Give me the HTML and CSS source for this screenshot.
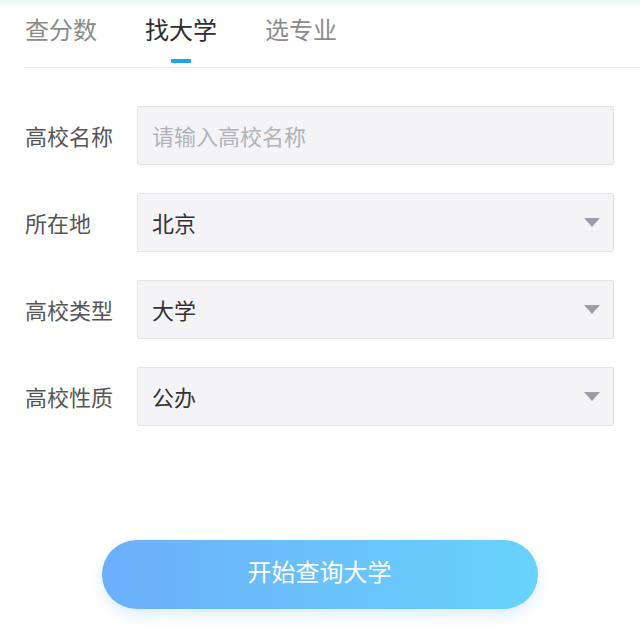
FILE: index.html
```html
<!DOCTYPE html>
<html lang="zh-CN">
<head>
<meta charset="utf-8">
<title>找大学</title>
<link rel="stylesheet" href="styles.css">
</head>
<body>
<div class="page">
  <nav class="tabs">
    <div class="tab">查分数</div>
    <div class="tab active">找大学<span class="bar"></span></div>
    <div class="tab">选专业</div>
  </nav>
  <div class="divider"></div>
  <form class="form">
    <div class="row">
      <label class="label">高校名称</label>
      <div class="field"><span class="placeholder">请输入高校名称</span></div>
    </div>
    <div class="row">
      <label class="label">所在地</label>
      <div class="field select"><span class="value">北京</span><span class="caret"></span></div>
    </div>
    <div class="row">
      <label class="label">高校类型</label>
      <div class="field select"><span class="value">大学</span><span class="caret"></span></div>
    </div>
    <div class="row">
      <label class="label">高校性质</label>
      <div class="field select"><span class="value">公办</span><span class="caret"></span></div>
    </div>
  </form>
  <div class="actions">
    <button class="submit" type="button">开始查询大学</button>
  </div>
</div>
</body>
</html>
```
FILE: styles.css
```css
html, body {
  margin: 0;
  padding: 0;
  background: #ffffff;
}
body {
  font-family: "Noto Sans CJK SC", "Noto Sans", sans-serif;
  width: 640px;
  height: 638px;
  overflow: hidden;
}
.page {
  background: linear-gradient(to bottom, #e6f8f6 0px, #ffffff 9px);
  height: 638px;
}
.tabs {
  display: flex;
  gap: 48px;
  padding-left: 25px;
  height: 67px;
}
.tab {
  display: flex;
  flex-direction: column;
  align-items: center;
  padding-top: 15px;
  font-size: 24px;
  line-height: 28px;
  color: #8a8a8a;
}
.tab.active {
  color: #2e2e2e;
}
.bar {
  display: block;
  width: 20px;
  height: 4px;
  margin-top: 16px;
  background: #1ea3e9;
  border-radius: 1px;
}
.divider {
  height: 1px;
  margin-left: 24px;
  background: #eeeeee;
}
.form {
  margin: 38px 0 0;
  display: flex;
  flex-direction: column;
  gap: 28px;
}
.row {
  display: flex;
  align-items: center;
  padding-left: 25px;
  padding-right: 26px;
}
.label {
  width: 112px;
  flex: none;
  font-size: 22px;
  line-height: 26px;
  padding-bottom: 2px;
  color: #555555;
}
.field {
  flex: 1;
  box-sizing: border-box;
  height: 59px;
  display: flex;
  align-items: center;
  padding: 0 13px 2px 14px;
  background: #f4f4f6;
  border: 1px solid #e4e4e7;
  border-radius: 2px;
  font-size: 22px;
  line-height: 26px;
}
.placeholder {
  color: #b2b2ba;
}
.value {
  flex: 1;
  color: #333333;
}
.caret {
  width: 0;
  height: 0;
  margin-top: 2px;
  border-left: 8px solid transparent;
  border-right: 8px solid transparent;
  border-top: 9px solid #9d9daa;
}
.actions {
  display: flex;
  justify-content: center;
  margin-top: 114px;
}
.submit {
  width: 436px;
  height: 69px;
  margin-left: -1px;
  padding: 0 0 8px;
  border: none;
  border-radius: 35px;
  background: linear-gradient(to right, #6caffa, #67d3fb);
  box-shadow: 0 6px 14px rgba(110, 190, 250, 0.25);
  color: #ffffff;
  font-family: "Noto Sans CJK SC", "Noto Sans", sans-serif;
  font-size: 24px;
  line-height: 28px;
  cursor: pointer;
}
```
